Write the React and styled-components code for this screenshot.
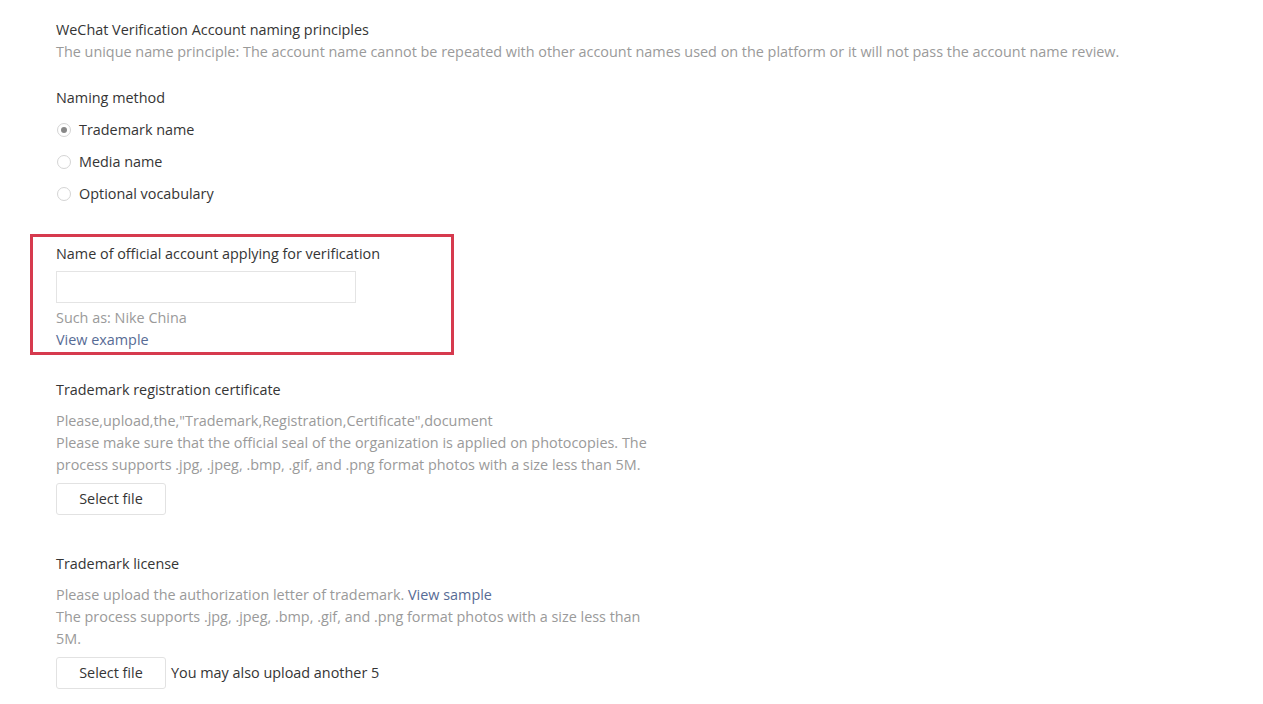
import React from "react";
import styled, { createGlobalStyle } from "styled-components";

const Global = createGlobalStyle`
  html, body { margin: 0; padding: 0; background: #fff; }
  body { font-family: "Open Sans", "Noto Sans", sans-serif; font-size: 14.4px; color: #353535; }
  * { box-sizing: border-box; }
`;

const Page = styled.div`
  padding: 19px 0 0 30px;
`;

const Section = styled.section`
  padding-left: 26px;
  margin-top: ${(p) => p.$mt || 0}px;
  line-height: 22px;
`;

const Highlight = styled.section`
  width: 424px;
  margin-top: ${(p) => p.$mt || 0}px;
  border: 3px solid #d63a4e;
  padding: 6px 0 1px 23px;
  line-height: 22px;
`;

const Title = styled.div`
  color: #353535;
`;

const Hint = styled.div`
  color: #9a9a9a;
  margin-top: ${(p) => p.$mt || 0}px;
  max-width: ${(p) => p.$mw || "none"};
`;

const Link = styled.a`
  color: #576b95;
  text-decoration: none;
  cursor: pointer;
`;

const RadioList = styled.div`
  margin-top: 5px;
  display: flex;
  flex-direction: column;
`;

const RadioRow = styled.label`
  height: 32px;
  display: flex;
  align-items: center;
  gap: 8px;
  padding-left: 1px;
  color: #353535;
`;

const RadioDot = styled.span`
  width: 14px;
  height: 14px;
  border-radius: 50%;
  border: 1px solid #d4d4d4;
  display: flex;
  align-items: center;
  justify-content: center;
  &::after {
    content: "";
    width: 6px;
    height: 6px;
    border-radius: 50%;
    background: ${(p) => (p.$checked ? "#888" : "transparent")};
  }
`;

const Input = styled.input`
  display: block;
  width: 300px;
  height: 32px;
  margin-top: 6px;
  margin-bottom: 4px;
  border: 1px solid #e4e4e4;
  outline: none;
  padding: 0 8px;
  font: inherit;
`;

const FileRow = styled.div`
  margin-top: 7px;
  display: flex;
  align-items: center;
  gap: 5px;
  color: #353535;
`;

const Button = styled.button`
  width: 110px;
  height: 32px;
  border: 1px solid #e2e2e2;
  border-radius: 3px;
  background: #fff;
  font: inherit;
  color: #353535;
  cursor: pointer;
`;

const options = [
  { label: "Trademark name", checked: true },
  { label: "Media name", checked: false },
  { label: "Optional vocabulary", checked: false },
];

export default function App() {
  return (
    <Page>
      <Global />
      <Section>
        <Title>WeChat Verification Account naming principles</Title>
        <Hint>
          The unique name principle: The account name cannot be repeated with other account names used on the platform or it will not pass the account name review.
        </Hint>
      </Section>
      <Section $mt={24}>
        <Title>Naming method</Title>
        <RadioList>
          {options.map((o) => (
            <RadioRow key={o.label}>
              <RadioDot $checked={o.checked} />
              {o.label}
            </RadioRow>
          ))}
        </RadioList>
      </Section>
      <Highlight $mt={24}>
        <Title>Name of official account applying for verification</Title>
        <Input />
        <Hint>Such as: Nike China</Hint>
        <div>
          <Link>View example</Link>
        </div>
      </Highlight>
      <Section $mt={24}>
        <Title>Trademark registration certificate</Title>
        <Hint $mt={9} $mw="600px">
          Please,upload,the,"Trademark,Registration,Certificate",document
          <br />
          Please make sure that the official seal of the organization is applied on photocopies. The process supports .jpg, .jpeg, .bmp, .gif, and .png format photos with a size less than 5M.
        </Hint>
        <FileRow>
          <Button>Select file</Button>
        </FileRow>
      </Section>
      <Section $mt={38}>
        <Title>Trademark license</Title>
        <Hint $mt={9} $mw="600px">
          Please upload the authorization letter of trademark. <Link>View sample</Link>
          <br />
          The process supports .jpg, .jpeg, .bmp, .gif, and .png format photos with a size less than 5M.
        </Hint>
        <FileRow>
          <Button>Select file</Button>
          <span>You may also upload another 5</span>
        </FileRow>
      </Section>
    </Page>
  );
}
